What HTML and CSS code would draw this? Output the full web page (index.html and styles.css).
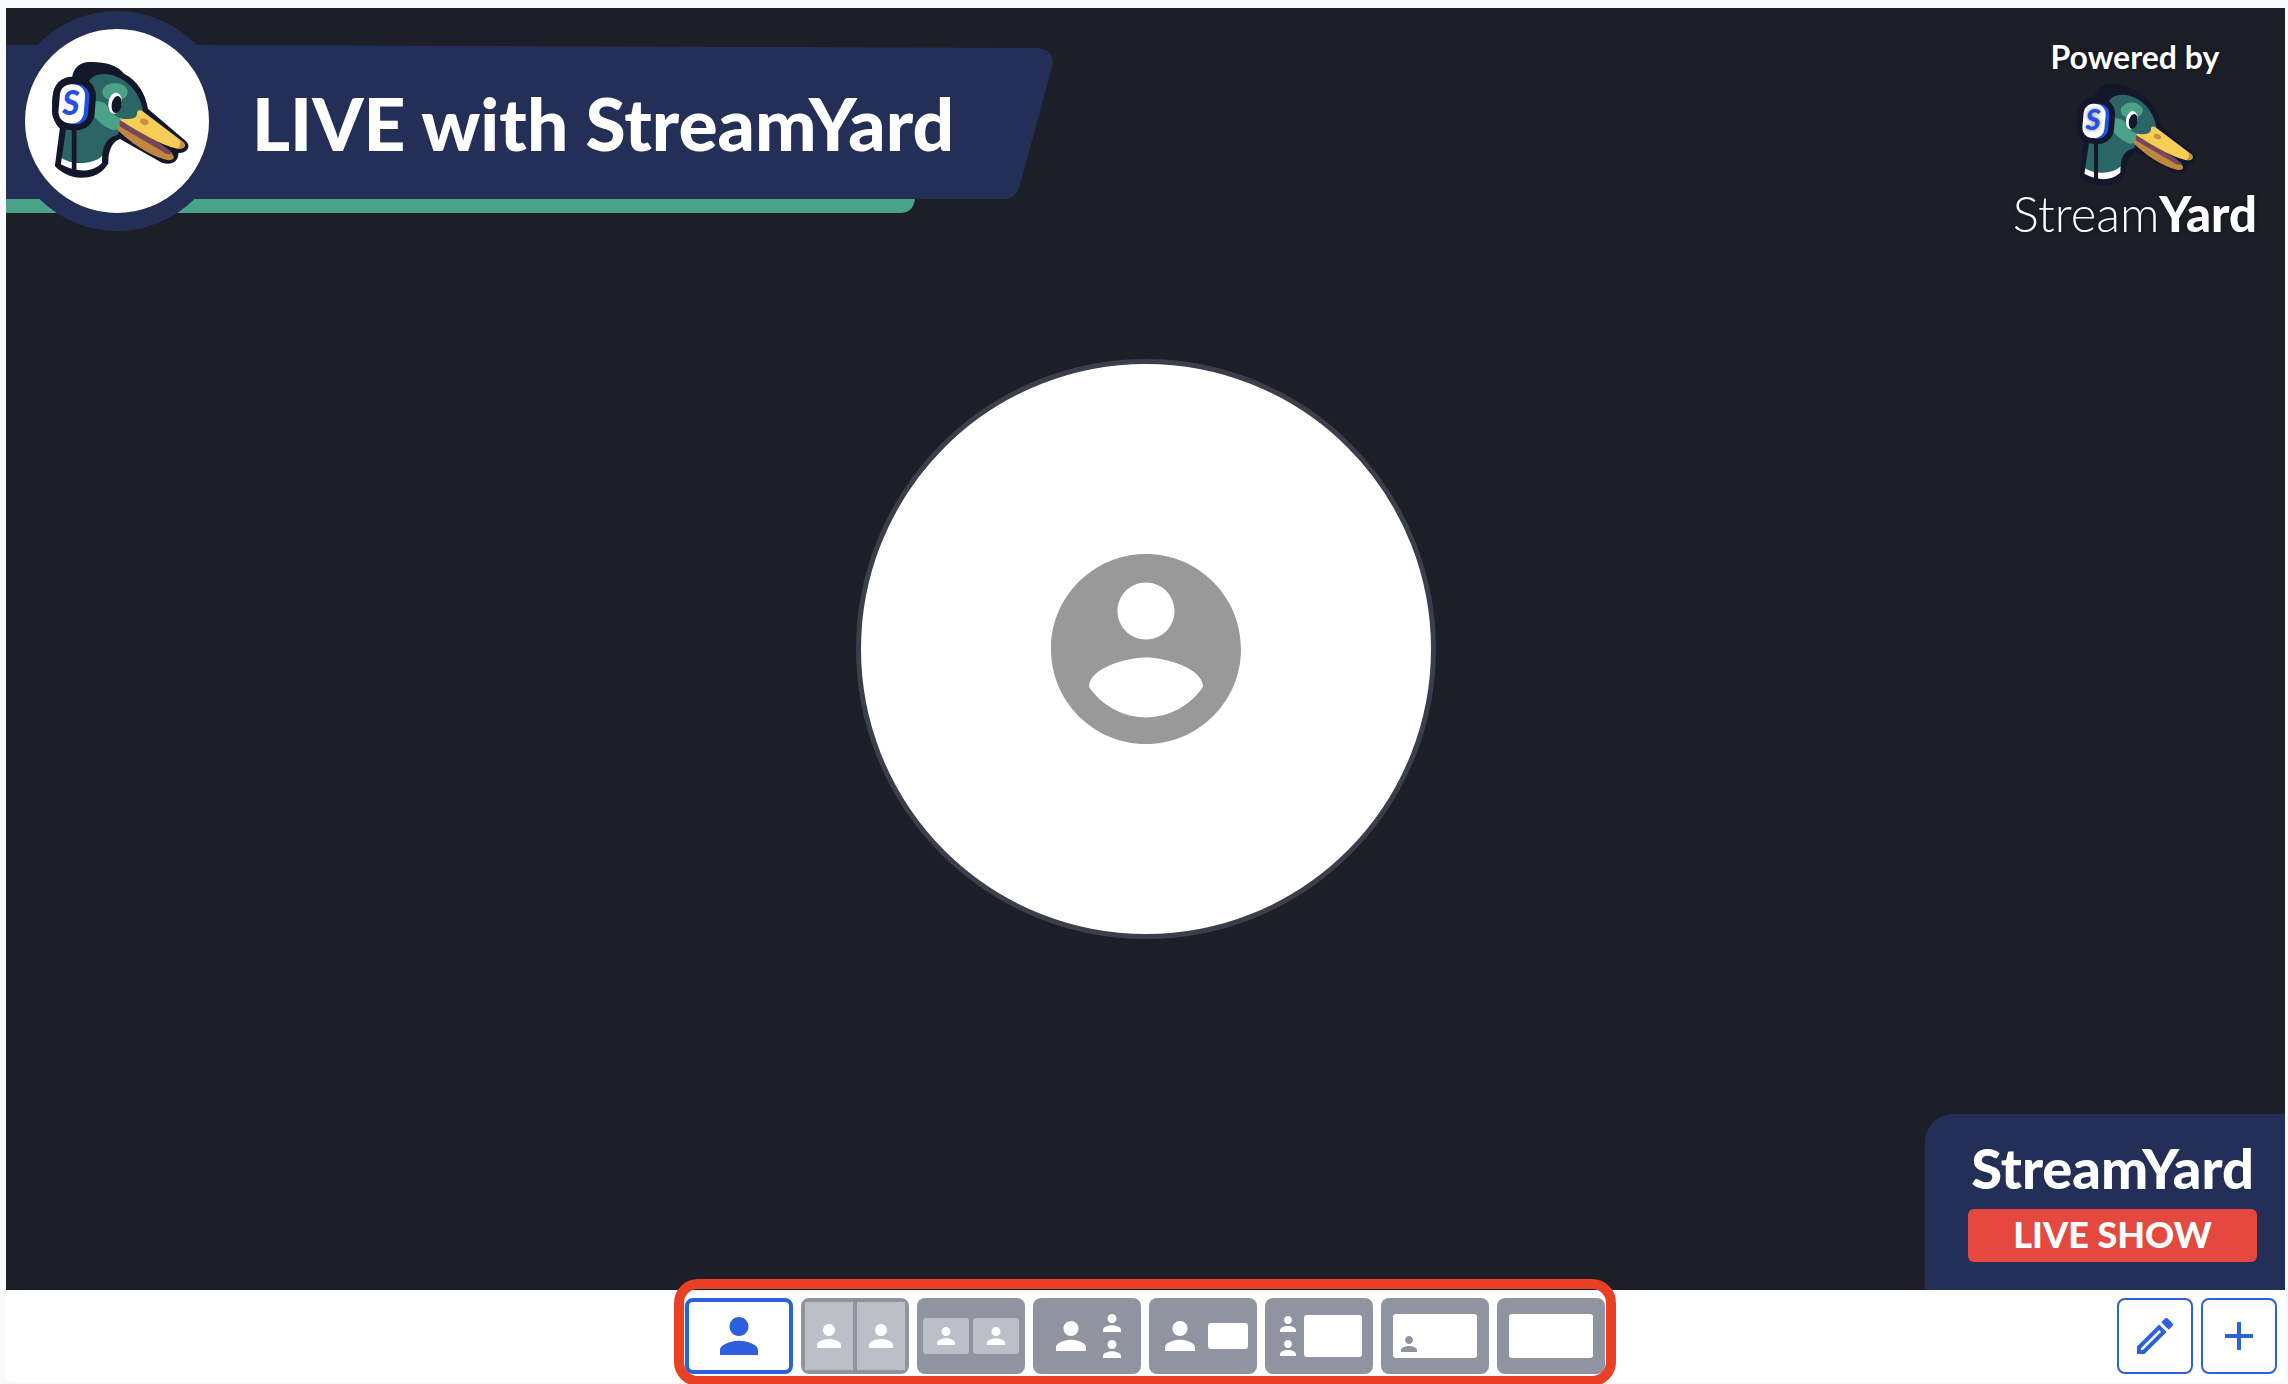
FILE: index.html
```html
<!DOCTYPE html>
<html lang="en">
<head>
  <meta charset="UTF-8">
  <meta name="viewport" content="width=device-width, initial-scale=1.0">
  <title>StreamYard Studio</title>
  <link rel="stylesheet" href="styles.css">
</head>
<body>
  <!-- Shared drawings -->
  <svg class="symbols" aria-hidden="true">
    <symbol id="person" viewBox="4 4 16 16">
      <path d="M12 12c2.21 0 4-1.79 4-4s-1.79-4-4-4-4 1.79-4 4 1.79 4 4 4zm0 2c-2.67 0-8 1.34-8 4v2h16v-2c0-2.66-5.33-4-8-4z"/>
    </symbol>
    <symbol id="duck" viewBox="155 180 420 355">
      <path fill="#13172b" d="M218 228C222 200 243 183 270 183C310 181 356 192 374 218C415 238 440 280 446 324L560 421C578 438 563 458 538 457C537 485 516 495 488 486L362 415C338 424 326 450 327 488C308 518 280 531 245 531C212 531 185 516 166 496L181 383C156 365 154 300 162 272C170 242 195 228 218 228Z"/>
      <path fill="#2b6566" d="M268 242C282 214 330 210 372 237C408 260 426 297 432 332L366 378L355 402C322 410 308 438 309 470C290 490 220 494 187 472L200 380L288 300C288 275 280 255 268 242Z"/>
      <path fill="#fff" d="M187 472C215 492 280 494 308 466V486C285 512 238 520 184 491Z"/>
      <ellipse cx="347" cy="273" rx="38" ry="27" fill="#4aa387"/>
      <path fill="#4aa387" d="M284 300C306 300 322 304 326 322C334 340 352 344 364 354C366 372 358 388 342 388C312 380 286 352 278 338Z"/>
      <ellipse cx="347" cy="307" rx="20" ry="32" fill="#fff" transform="rotate(10 347 307)"/>
      <ellipse cx="352" cy="311" rx="15" ry="26" fill="#13172b" transform="rotate(10 352 311)"/>
      <path fill="#c0883f" d="M360 368L516 458C530 468 524 480 505 478C450 466 390 422 353 386Z"/>
      <path fill="#774759" d="M362 356C420 394 480 420 522 458C510 462 500 460 490 452L360 376Z"/>
      <path fill="#f7cd55" d="M363 352C384 358 412 354 413 340C412 328 421 325 432 333L552 424C562 434 556 446 540 444C500 440 430 400 363 358Z"/>
      <path fill="#c98e3f" d="M541 416L552 424C562 434 556 446 535 443C545 436 546 426 541 416Z"/>
      <ellipse cx="435" cy="363" rx="13" ry="9" fill="#c98e3f" transform="rotate(20 435 363)"/>
      <rect x="159" y="228" width="129" height="160" rx="56" fill="#13172b" transform="rotate(4 223 308)"/>
      <rect x="190" y="250" width="78" height="120" rx="36" fill="#2450ea" transform="rotate(5 229 310)"/>
      <rect x="179" y="250" width="76" height="118" rx="34" fill="#fff" transform="rotate(5 217 309)"/>
      <path d="M217 380h14v136h-14z" fill="#13172b"/>
    </symbol>
  </svg>

  <main class="studio">
    <section class="stage">
      <div class="avatar">
        <svg class="avatar-icon" viewBox="2 2 20 20" aria-hidden="true">
          <path d="M12 2C6.48 2 2 6.48 2 12s4.48 10 10 10 10-4.48 10-10S17.52 2 12 2zm0 3c1.66 0 3 1.34 3 3s-1.34 3-3 3-3-1.34-3-3 1.34-3 3-3zm0 14.200c-2.500 0-4.710-1.280-6-3.220.030-1.990 4-3.080 6-3.080 1.990 0 5.970 1.090 6 3.080-1.290 1.940-3.500 3.220-6 3.220z"/>
        </svg>
      </div>

      <header class="banner">
        <svg class="banner-shape" viewBox="0 0 1047 168" aria-hidden="true">
          <path fill="#4aa387" d="M0 140H909V154Q907 168 894 168H0Z"/>
          <path fill="#232f57" d="M0 0H190L1030 3Q1050 4 1046 22L1014 140Q1010 154 998 154H0Z"/>
        </svg>
        <div class="banner-logo">
          <svg class="duck-large" viewBox="155 180 420 355" role="img" aria-label="Duck logo">
            <use href="#duck" x="155" y="180" width="420" height="355"/>
            <text x="214" y="342" class="duck-letter" text-anchor="middle">S</text>
          </svg>
        </div>
        <h1>LIVE with StreamYard</h1>
      </header>

      <div class="watermark">
        <span class="powered">Powered by</span>
        <svg class="duck-small" viewBox="155 180 420 355" role="img" aria-label="Duck logo">
          <use href="#duck" x="155" y="180" width="420" height="355"/>
          <text x="214" y="342" class="duck-letter" text-anchor="middle">S</text>
        </svg>
        <span class="wordmark">Stream<b>Yard</b></span>
      </div>

      <div class="show-card">
        <span class="show-name">StreamYard</span>
        <span class="show-tag">LIVE SHOW</span>
      </div>
    </section>

    <footer class="toolbar">
      <div class="layouts">
        <button class="layout active" aria-label="Solo">
          <svg class="p38"><use href="#person"/></svg>
        </button>
        <button class="layout cropped" aria-label="Cropped">
          <span class="cell"><svg class="p24"><use href="#person"/></svg></span>
          <span class="cell"><svg class="p24"><use href="#person"/></svg></span>
        </button>
        <button class="layout group" aria-label="Group">
          <span class="cell"><svg class="p18"><use href="#person"/></svg></span>
          <span class="cell"><svg class="p18"><use href="#person"/></svg></span>
        </button>
        <button class="layout leader" aria-label="Leader">
          <svg class="p30"><use href="#person"/></svg>
          <span class="column">
            <svg class="p18"><use href="#person"/></svg>
            <svg class="p18"><use href="#person"/></svg>
          </span>
        </button>
        <button class="layout small-screen" aria-label="Small screen">
          <svg class="p30"><use href="#person"/></svg>
          <span class="screen"></span>
        </button>
        <button class="layout large-screen" aria-label="Large screen">
          <span class="column">
            <svg class="p16"><use href="#person"/></svg>
            <svg class="p16"><use href="#person"/></svg>
          </span>
          <span class="screen"></span>
        </button>
        <button class="layout full-screen" aria-label="Picture in picture">
          <span class="screen"><svg class="p16"><use href="#person"/></svg></span>
        </button>
        <button class="layout full-screen" aria-label="Full screen">
          <span class="screen"></span>
        </button>
      </div>

      <div class="actions">
        <button class="action" aria-label="Edit layouts">
          <svg viewBox="0 0 24 24"><path d="M14.06 9L15 9.940 5.920 19H5V18.080L14.060 9M17.660 3C17.410 3 17.150 3.100 16.960 3.290L15.130 5.120 18.880 8.870 20.710 7.040C21.100 6.650 21.100 6 20.710 5.630L18.370 3.290C18.170 3.090 17.920 3 17.660 3M14.060 6.190L3 17.250V21H6.750L17.810 9.940 14.060 6.190Z"/></svg>
        </button>
        <button class="action" aria-label="Add layout">
          <svg viewBox="0 0 24 24"><path d="M19 13h-6v6h-2v-6H5v-2h6V5h2v6h6v2z"/></svg>
        </button>
      </div>
    </footer>
  </main>
</body>
</html>
```
FILE: styles.css
```css
:root {
  --stage: #1d1f28;
  --navy: #232f57;
  --blue: #2c60dd;
  --gray: #9094a0;
  --light-gray: #bcbfc7;
  --red: #e4483f;
  --highlight: #ea4025;
}

* {
  box-sizing: border-box;
}

body {
  margin: 0;
  padding: 8px 3px 2px 5px;
  background: #f7f9fb;
  font-family: Lato, "Open Sans", sans-serif;
  color: white;
  overflow: hidden;
}

button {
  padding: 0;
  border: none;
  font: inherit;
  cursor: pointer;
}

svg {
  display: block;
  fill: currentColor;
}

.symbols {
  position: absolute;
  width: 0;
  height: 0;
}

.studio {
  background: white;
  border-radius: 0 0 8px 8px;
}

/* Stage */
.stage {
  position: relative;
  display: flex;
  align-items: center;
  justify-content: center;
  aspect-ratio: 16 / 9;
  margin-left: 1px;
  background: var(--stage);
}

.avatar {
  display: flex;
  align-items: center;
  justify-content: center;
  width: 580px;
  height: 580px;
  border: 5px solid #3b3e4b;
  border-radius: 50%;
  background: white;
  color: #999;
}

.avatar-icon {
  width: 190px;
  height: 190px;
}

.banner {
  position: absolute;
  top: 3px;
  left: 0;
  display: flex;
  align-items: center;
  gap: 25px;
  padding-left: 1px;
}

.banner-shape {
  position: absolute;
  top: 34px;
  left: 0;
  width: 1047px;
  height: 168px;
}

.banner-logo {
  position: relative;
  display: flex;
  align-items: center;
  justify-content: center;
  width: 220px;
  height: 220px;
  border: 18px solid var(--navy);
  border-radius: 50%;
  background: white;
}

.duck-large {
  width: 140px;
  height: 118px;
  margin: 0 0 2px 8px;
}

.duck-letter {
  font: italic 900 100px Lato, sans-serif;
  fill: #2450ea;
}

.banner h1 {
  position: relative;
  margin: 0;
  padding-top: 4px;
  font-size: 73px;
  line-height: 84px;
  font-weight: 900;
  white-space: nowrap;
}

.watermark {
  position: absolute;
  top: 29px;
  right: 28px;
  display: flex;
  flex-direction: column;
  align-items: center;
  text-shadow: 0 0 4px rgba(0, 0, 0, 0.5);
}

.powered {
  font-size: 32px;
  line-height: 40px;
  font-weight: 700;
}

.duck-small {
  width: 122px;
  height: 104px;
  margin: 6px 0 0 4px;
}

.wordmark {
  font-size: 49px;
  line-height: 52px;
  font-weight: 300;
}

.wordmark b {
  font-weight: 900;
}

.show-card {
  position: absolute;
  right: 0;
  bottom: 0;
  display: flex;
  flex-direction: column;
  gap: 11px;
  width: 360px;
  padding: 24px 28px 28px 43px;
  border-radius: 28px 0 0 0;
  background: var(--navy);
  font-weight: 900;
  text-align: center;
}

.show-name {
  font-size: 56px;
  line-height: 60px;
}

.show-tag {
  padding-bottom: 3px;
  border-radius: 6px;
  background: var(--red);
  font-size: 36px;
  line-height: 50px;
}

/* Toolbar */
.toolbar {
  display: grid;
  grid-template-columns: 1fr auto 1fr;
  padding: 8px;
}

.layouts {
  position: relative;
  grid-column: 2;
  display: flex;
  gap: 8px;
}

/* Highlight frame around the layout picker */
.layouts::after {
  content: "";
  position: absolute;
  inset: -19px -11px -12px;
  border: 10px solid var(--highlight);
  border-radius: 24px;
  pointer-events: none;
}

.layout {
  display: flex;
  align-items: center;
  justify-content: center;
  width: 108px;
  height: 76px;
  border-radius: 8px;
  background: var(--gray);
  color: white;
}

.layout.active {
  border: 4px solid var(--blue);
  background: white;
  color: var(--blue);
}

.p16 { width: 16px; height: 16px; }
.p18 { width: 18px; height: 18px; }
.p24 { width: 24px; height: 24px; }
.p30 { width: 30px; height: 30px; }
.p38 { width: 38px; height: 38px; }

.cell {
  display: flex;
  align-items: center;
  justify-content: center;
  background: var(--light-gray);
}

.cropped,
.group {
  gap: 4px;
}

.cropped .cell {
  width: 48px;
  height: 68px;
}

.group .cell {
  width: 46px;
  height: 36px;
  border-radius: 3px;
}

.column {
  display: flex;
  flex-direction: column;
  gap: 8px;
}

.screen {
  border-radius: 3px;
  background: white;
}

.leader {
  gap: 17px;
  padding-left: 3px;
}

.small-screen {
  gap: 13px;
  padding-left: 7px;
}

.small-screen .screen {
  width: 40px;
  height: 26px;
}

.large-screen {
  gap: 8px;
  padding-left: 4px;
}

.large-screen .screen {
  width: 58px;
  height: 42px;
}

.full-screen .screen {
  display: flex;
  align-items: flex-end;
  width: 84px;
  height: 44px;
  padding: 6px 8px;
  color: var(--gray);
}

.actions {
  display: flex;
  justify-content: flex-end;
  gap: 8px;
}

.action {
  display: flex;
  align-items: center;
  justify-content: center;
  width: 76px;
  height: 76px;
  border: 2px solid var(--blue);
  border-radius: 8px;
  background: white;
  color: var(--blue);
}

.action svg {
  width: 48px;
  height: 48px;
}
```
